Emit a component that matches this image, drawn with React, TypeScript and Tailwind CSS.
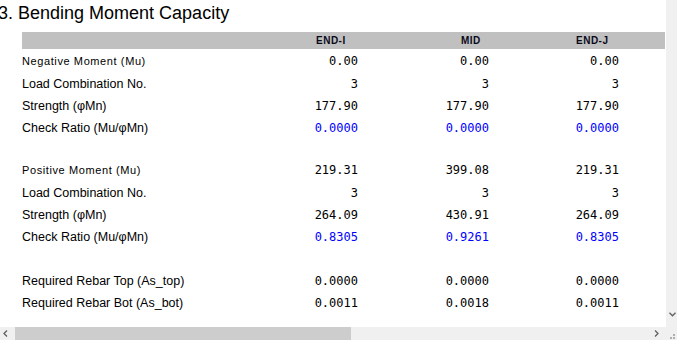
import React from 'react';

type Row = {
  label: string;
  values: string[];
  small?: boolean;
  blue?: boolean;
};

const groups: Row[][] = [
  [
    { label: 'Negative Moment (Mu)', values: ['0.00', '0.00', '0.00'], small: true },
    { label: 'Load Combination No.', values: ['3', '3', '3'] },
    { label: 'Strength (φMn)', values: ['177.90', '177.90', '177.90'] },
    { label: 'Check Ratio (Mu/φMn)', values: ['0.0000', '0.0000', '0.0000'], blue: true },
  ],
  [
    { label: 'Positive Moment (Mu)', values: ['219.31', '399.08', '219.31'], small: true },
    { label: 'Load Combination No.', values: ['3', '3', '3'] },
    { label: 'Strength (φMn)', values: ['264.09', '430.91', '264.09'] },
    { label: 'Check Ratio (Mu/φMn)', values: ['0.8305', '0.9261', '0.8305'], blue: true },
  ],
  [
    { label: 'Required Rebar Top (As_top)', values: ['0.0000', '0.0000', '0.0000'] },
    { label: 'Required Rebar Bot (As_bot)', values: ['0.0011', '0.0018', '0.0011'] },
  ],
];

const cellWidths = ['w-[62px]', 'w-[131px]', 'w-[130px]'];

const TableRow: React.FC<{ row: Row }> = ({ row }) => (
  <div className={`flex items-baseline ${row.small ? 'h-[24px] leading-[24px]' : 'h-[22px] leading-[22px]'}`}>
    <div
      className={`w-[274px] shrink-0 text-black ${
        row.small ? 'text-[11px] tracking-[0.6px]' : 'text-[12.5px]'
      }`}
    >
      {row.label}
    </div>
    {row.values.map((v, i) => (
      <div
        key={i}
        className={`${cellWidths[i]} shrink-0 text-right font-['DejaVu_Sans_Mono',monospace] text-[12px] ${
          row.blue ? 'text-[#0000ff]' : 'text-black'
        }`}
      >
        {v}
      </div>
    ))}
  </div>
);

const App: React.FC = () => {
  return (
    <div className="w-[677px] h-[340px] overflow-hidden bg-white flex flex-col font-['Liberation_Sans',Arial,sans-serif]">
      <div className="flex h-[327px]">
        {/* content */}
        <div className="w-[666px] flex flex-col">
          <div className="-ml-[2px] pt-[1px] h-[32px] text-[18px] leading-[24px] text-black whitespace-nowrap">
            3. Bending Moment Capacity
          </div>
          <div className="ml-[22px] w-[643px]">
            <div className="flex h-[17px] items-center bg-[#c0c0c0] text-[10px] font-bold tracking-[0.5px] text-[#0a0a1a]">
              <div className="w-[274px]" />
              <div className="w-[62px] pl-[20px]">END-I</div>
              <div className="w-[131px] pl-[103px]">MID</div>
              <div className="w-[130px] pl-[87px]">END-J</div>
            </div>
            <div className="flex flex-col">
              {groups[0].map((r, i) => (
                <TableRow key={i} row={r} />
              ))}
              <div className="h-[19px]" />
              {groups[1].map((r, i) => (
                <TableRow key={i} row={r} />
              ))}
              <div className="h-[22px]" />
              {groups[2].map((r, i) => (
                <TableRow key={i} row={r} />
              ))}
            </div>
          </div>
        </div>
        {/* vertical scrollbar */}
        <div className="w-[11px] bg-[#f0f0f0] flex flex-col justify-end items-center pb-[10px]">
          <svg width="7" height="5" viewBox="0 0 7 5" className="ml-[2px]">
            <polyline points="0.5,0.8 3.5,3.8 6.5,0.8" fill="none" stroke="#606060" strokeWidth="1.3" />
          </svg>
        </div>
      </div>
      {/* horizontal scrollbar */}
      <div className="flex h-[13px] bg-[#f0f0f0]">
        <div className="w-[15px] flex items-center justify-center">
          <svg width="5" height="7" viewBox="0 0 5 7" className="-ml-[4px]">
            <polyline points="4,0.5 1,3.5 4,6.5" fill="none" stroke="#606060" strokeWidth="1.3" />
          </svg>
        </div>
        <div className="w-[336px] bg-[#cdcdcd]" />
        <div className="flex-1 flex items-center justify-end pr-[7px]">
          <svg width="5" height="7" viewBox="0 0 5 7">
            <polyline points="1,0.5 4,3.5 1,6.5" fill="none" stroke="#606060" strokeWidth="1.3" />
          </svg>
        </div>
        <div className="w-[11px] relative">
          <span className="absolute right-[2px] bottom-[1px] w-[2px] h-[2px] bg-[#b0b0b0]" />
          <span className="absolute right-[5px] bottom-[1px] w-[2px] h-[2px] bg-[#b0b0b0]" />
          <span className="absolute right-[2px] bottom-[4px] w-[2px] h-[2px] bg-[#b0b0b0]" />
        </div>
      </div>
    </div>
  );
};

export default App;
